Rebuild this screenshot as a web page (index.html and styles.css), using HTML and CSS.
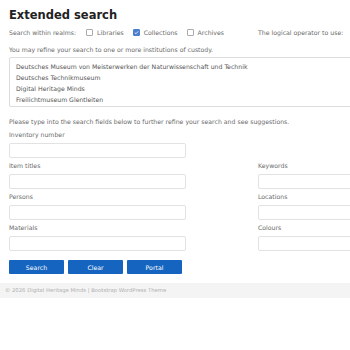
FILE: index.html
```html
<!DOCTYPE html>
<html>
<head>
<meta charset="utf-8">
<link rel="stylesheet" href="styles.css">
</head>
<body>
<main class="page">
  <h1 class="title">Extended search</h1>
  <div class="realms">
    <div class="realm-list">
      <span class="label">Search within realms:</span>
      <label class="check"><span class="box"></span>Libraries</label>
      <label class="check"><span class="box on"><svg viewBox="0 0 6 6" width="5" height="5"><path d="M1 3.2 L2.4 4.5 L5 1.6" fill="none" stroke="#fff" stroke-width="1"/></svg></span>Collections</label>
      <label class="check"><span class="box"></span>Archives</label>
    </div>
    <span class="operator">The logical operator to use:</span>
  </div>
  <p class="note">You may refine your search to one or more institutions of custody.</p>
  <div class="select">
    <div class="opt">Deutsches Museum von Meisterwerken der Naturwissenschaft und Technik</div>
    <div class="opt">Deutsches Technikmuseum</div>
    <div class="opt">Digital Heritage Minds</div>
    <div class="opt">Freilichtmuseum Glentleiten</div>
  </div>
  <p class="note hint">Please type into the search fields below to further refine your search and see suggestions.</p>
  <div class="fields">
    <div class="field"><div class="flabel">Inventory number</div><div class="input"></div></div>
    <div class="field empty"></div>
    <div class="field"><div class="flabel">Item titles</div><div class="input"></div></div>
    <div class="field"><div class="flabel">Keywords</div><div class="input"></div></div>
    <div class="field"><div class="flabel">Persons</div><div class="input"></div></div>
    <div class="field"><div class="flabel">Locations</div><div class="input"></div></div>
    <div class="field"><div class="flabel">Materials</div><div class="input"></div></div>
    <div class="field"><div class="flabel">Colours</div><div class="input"></div></div>
  </div>
  <div class="buttons">
    <button class="btn">Search</button>
    <button class="btn">Clear</button>
    <button class="btn">Portal</button>
  </div>
</main>
<footer class="footer">© 2026 Digital Heritage Minds | Bootstrap WordPress Theme</footer>
</body>
</html>
```
FILE: styles.css
```css
html { overflow: hidden; }
html, body { margin: 0; padding: 0; background: #fff; }
body { font-family: "DejaVu Sans", "Open Sans", sans-serif; color: #6a6a6a; }
.page { padding: 0 0 0 9px; width: 420px; }
.title { margin: 0; padding-top: 7px; font-size: 11.5px; line-height: 17px; font-weight: 700; color: #222; }
.realms { display: grid; grid-template-columns: 249px auto; align-items: center; font-size: 6.2px; height: 9px; margin-top: 3.5px; }
.realm-list { display: flex; align-items: center; }
.label { margin-right: 10px; }
.check { display: flex; align-items: center; margin-right: 9px; }
.box { width: 5px; height: 5px; border: 1px solid #aaa; border-radius: 1px; margin-right: 4px; display: flex; align-items: center; justify-content: center; }
.box.on { background: #4a7fd0; border-color: #4a7fd0; }
.note { margin: 8px 0 0; font-size: 6.2px; line-height: 9px; }
.select { margin-top: 3px; border: 1px solid #ddd; border-radius: 2px; padding: 3px 6px 1px; }
.opt { font-size: 6.2px; line-height: 11px; color: #555; }
.hint { margin-top: 10.5px; }
.fields { display: grid; grid-template-columns: 177px 177px; column-gap: 72px; margin-top: 4px; }
.flabel { font-size: 6.2px; line-height: 9px; height: 9px; }
.field { padding-bottom: 3px; }
.input { margin-top: 4px; height: 13px; border: 1px solid #e2e2e2; border-radius: 2px; }
.buttons { display: flex; gap: 4px; margin-top: 6px; }
.btn { width: 55px; height: 14px; background: #1565c0; color: #fff; border: none; border-radius: 1px; font-family: inherit; font-size: 6.2px; padding: 0; }
.footer { margin-top: 9px; background: #f4f4f4; height: 15px; font-size: 5.3px; line-height: 15px; padding-left: 5px; color: #b0b0b0; }
```
